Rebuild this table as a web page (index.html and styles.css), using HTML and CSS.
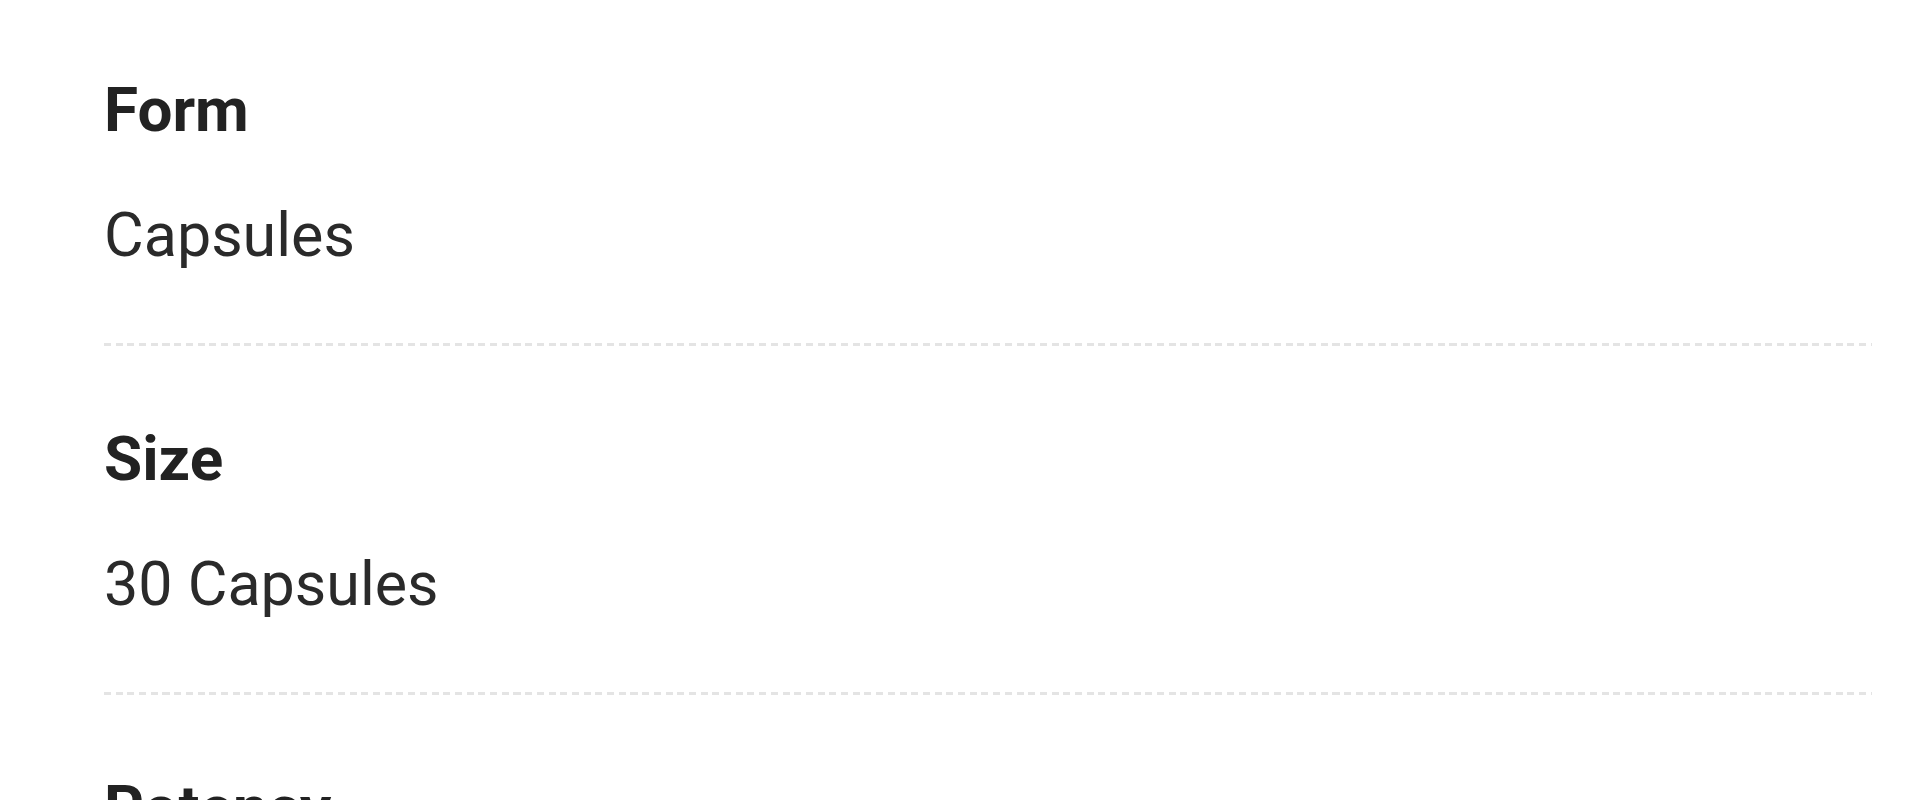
FILE: index.html
```html
<!DOCTYPE html>
<html>

<head>
    <title>Product details</title>
    <link rel="stylesheet" href="styles.css">
</head>

<body>
    <div class="specs">
        <div class="row">
            <div class="label">Form</div>
            <div class="value">Capsules</div>
        </div>
        <div class="row">
            <div class="label">Size</div>
            <div class="value">30 Capsules</div>
        </div>
        <div class="row">
            <div class="label">Potency</div>
        </div>
    </div>
</body>

</html>
```

FILE: styles.css
```css
body {
    margin: 0;
    background-color: white;
    font-family: Roboto, "Liberation Sans", sans-serif;
    overflow: hidden;
}

.specs {
    padding: 0 60px 0 104px;
}

.row {
    padding: 76px 0 74px;
    background: repeating-linear-gradient(to right, #e4e4e4 0 7px, transparent 7px 11.7px) left bottom / 100% 3px no-repeat;
}

.row:first-child {
    padding-top: 73px;
}

.label {
    font-size: 62px;
    line-height: 74px;
    font-weight: bold;
    color: #222;
    margin-bottom: 51px;
}

.value {
    font-size: 61px;
    line-height: 74px;
    color: #2a2a2a;
}
```
